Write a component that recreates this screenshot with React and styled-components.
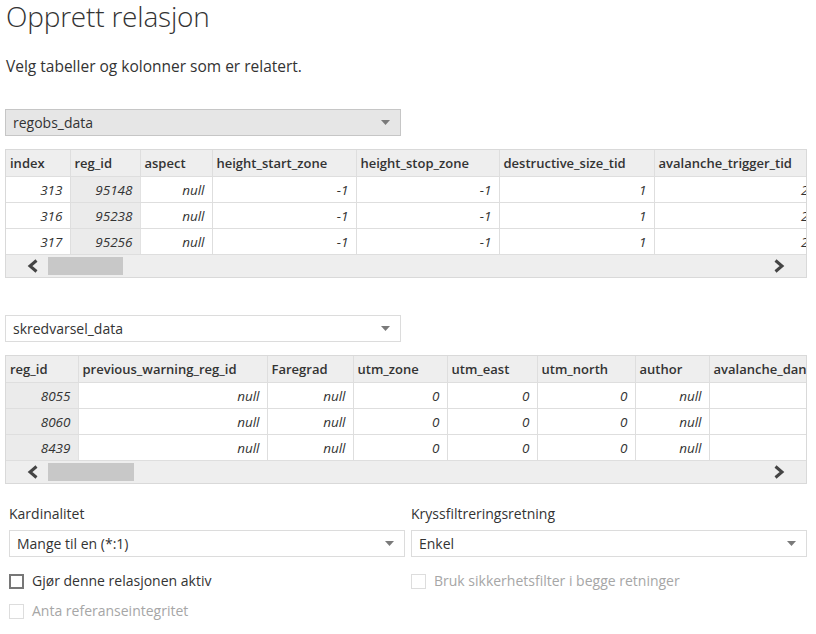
import React from "react";
import styled, { createGlobalStyle } from "styled-components";

const GlobalStyle = createGlobalStyle`
  html, body {
    margin: 0;
    padding: 0;
    background: #ffffff;
  }
  body {
    font-family: "Open Sans", "Liberation Sans", sans-serif;
    color: #333333;
  }
`;

const Page = styled.div`
  width: 816px;
  height: 634px;
  overflow: hidden;
  padding: 0 9px 0 5px;
  box-sizing: border-box;
`;

const Title = styled.h1`
  margin: -2px 0 0;
  padding-left: 1px;
  font-size: 28px;
  line-height: 36px;
  font-weight: 300;
  color: #333333;
  letter-spacing: -0.2px;
`;

const Subtitle = styled.p`
  margin: 22px 0 0;
  padding-left: 1px;
  font-size: 15.5px;
  line-height: 20px;
  color: #333333;
`;

const Select = styled.div`
  display: flex;
  align-items: center;
  justify-content: space-between;
  width: ${(p) => p.$width || 396}px;
  height: 27px;
  box-sizing: border-box;
  padding: 0 10px 0 7px;
  border: 1px solid ${(p) => (p.$filled ? "#c6c6c6" : "#dcdcdc")};
  background: ${(p) => (p.$filled ? "#e6e6e6" : "#ffffff")};
  font-size: 14px;
  color: #333333;
  margin-top: ${(p) => p.$top || 0}px;
`;

const Caret = () => (
  <svg width="9" height="5" viewBox="0 0 9 5">
    <path d="M0 0h9L4.5 5z" fill="#7a7a7a" />
  </svg>
);

const Grid = styled.div`
  width: 802px;
  margin-top: 13px;
  border: 1px solid #d9d9d9;
  box-sizing: border-box;
  overflow: hidden;
`;

const Table = styled.table`
  border-collapse: collapse;
  table-layout: fixed;
  font-size: 13px;
`;

const Head = styled.th`
  height: 26px;
  padding: 0 6px 0 4px;
  text-align: left;
  font-weight: 600;
  background: #eeeeee;
  color: #333333;
  border-right: 1px solid #dedede;
  border-bottom: 1px solid #dedede;
  white-space: nowrap;
  overflow: hidden;
`;

const Cell = styled.td`
  height: 25px;
  padding: 0 7px 0 4px;
  text-align: right;
  font-style: italic;
  font-size: 13.5px;
  color: #333333;
  background: ${(p) => (p.$key ? "#ebebeb" : "#ffffff")};
  border-right: 1px solid ${(p) => (p.$key ? "#e2e2e2" : "#dedede")};
  border-bottom: 1px solid #dedede;
  white-space: nowrap;
  overflow: hidden;
`;

const ScrollBar = styled.div`
  display: flex;
  align-items: center;
  height: 22px;
  background: #eeeeee;
  padding: 0 20px 0 20px;
`;

const Thumb = styled.div`
  width: ${(p) => p.$w}px;
  height: 18px;
  background: #c8c8c8;
  margin-left: 8px;
`;

const Spacer = styled.div`
  flex: 1;
`;

const Chevron = ({ dir }) => (
  <svg width="14" height="14" viewBox="0 0 14 14">
    <path
      d={dir === "left" ? "M10.5 1.5L4 7l6.5 5.5" : "M3.5 1.5L10 7l-6.5 5.5"}
      fill="none"
      stroke="#444444"
      strokeWidth="3"
    />
  </svg>
);

const DataGrid = ({ columns, rows, keyCol, thumb }) => {
  const total = columns.reduce((s, c) => s + c.w, 0);
  return (
    <Grid>
      <Table style={{ width: total }}>
        <colgroup>
          {columns.map((c) => (
            <col key={c.name} style={{ width: c.w }} />
          ))}
        </colgroup>
        <thead>
          <tr>
            {columns.map((c) => (
              <Head key={c.name}>{c.name}</Head>
            ))}
          </tr>
        </thead>
        <tbody>
          {rows.map((r, i) => (
            <tr key={i}>
              {r.map((v, j) => (
                <Cell key={j} $key={j === keyCol}>
                  {v}
                </Cell>
              ))}
            </tr>
          ))}
        </tbody>
      </Table>
      <ScrollBar>
        <Chevron dir="left" />
        <Thumb $w={thumb} />
        <Spacer />
        <Chevron dir="right" />
      </ScrollBar>
    </Grid>
  );
};

const Options = styled.div`
  display: grid;
  grid-template-columns: 396px 396px;
  column-gap: 6px;
  margin-top: 20px;
  padding-left: 4px;
`;

const Field = styled.div`
  display: flex;
  flex-direction: column;
`;

const Label = styled.div`
  font-size: 14px;
  line-height: 20px;
  color: #333333;
  margin-bottom: 6px;
`;

const Check = styled.label`
  display: flex;
  align-items: center;
  gap: 8px;
  margin-top: ${(p) => p.$top}px;
  font-size: 14px;
  line-height: 20px;
  color: ${(p) => (p.$disabled ? "#a6a6a6" : "#333333")};
`;

const Box = styled.span`
  width: 15px;
  height: 15px;
  box-sizing: border-box;
  border: ${(p) => (p.$disabled ? "1px solid #dddddd" : "2px solid #777777")};
  background: #ffffff;
`;

const table1Cols = [
  { name: "index", w: 64 },
  { name: "reg_id", w: 70 },
  { name: "aspect", w: 72 },
  { name: "height_start_zone", w: 144 },
  { name: "height_stop_zone", w: 143 },
  { name: "destructive_size_tid", w: 155 },
  { name: "avalanche_trigger_tid", w: 162 },
];

const table1Rows = [
  ["313", "95148", "null", "-1", "-1", "1", "2"],
  ["316", "95238", "null", "-1", "-1", "1", "2"],
  ["317", "95256", "null", "-1", "-1", "1", "2"],
];

const table2Cols = [
  { name: "reg_id", w: 72 },
  { name: "previous_warning_reg_id", w: 189 },
  { name: "Faregrad", w: 86 },
  { name: "utm_zone", w: 94 },
  { name: "utm_east", w: 90 },
  { name: "utm_north", w: 98 },
  { name: "author", w: 74 },
  { name: "avalanche_danger", w: 140 },
];

const table2Rows = [
  ["8055", "null", "null", "0", "0", "0", "null", ""],
  ["8060", "null", "null", "0", "0", "0", "null", ""],
  ["8439", "null", "null", "0", "0", "0", "null", ""],
];

export default function App() {
  return (
    <Page>
      <GlobalStyle />
      <Title>Opprett relasjon</Title>
      <Subtitle>Velg tabeller og kolonner som er relatert.</Subtitle>

      <Select $filled $top={33}>
        <span>regobs_data</span>
        <Caret />
      </Select>
      <DataGrid columns={table1Cols} rows={table1Rows} keyCol={1} thumb={75} />

      <Select $top={37}>
        <span>skredvarsel_data</span>
        <Caret />
      </Select>
      <DataGrid columns={table2Cols} rows={table2Rows} keyCol={0} thumb={86} />

      <Options>
        <Field>
          <Label>Kardinalitet</Label>
          <Select>
            <span>Mange til en (*:1)</span>
            <Caret />
          </Select>
          <Check $top={14}>
            <Box />
            Gjør denne relasjonen aktiv
          </Check>
          <Check $top={10} $disabled>
            <Box $disabled />
            Anta referanseintegritet
          </Check>
        </Field>
        <Field>
          <Label>Kryssfiltreringsretning</Label>
          <Select>
            <span>Enkel</span>
            <Caret />
          </Select>
          <Check $top={14} $disabled>
            <Box $disabled />
            Bruk sikkerhetsfilter i begge retninger
          </Check>
        </Field>
      </Options>
    </Page>
  );
}
